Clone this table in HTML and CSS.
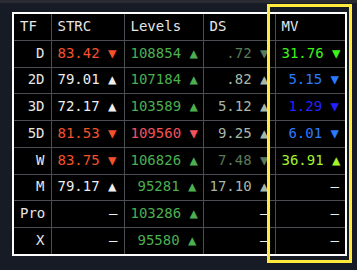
FILE: index.html
```html
<!DOCTYPE html>
<html>
<head>
<meta charset="utf-8">
<link rel="stylesheet" href="styles.css">
</head>
<body>
<div class="topbar"></div>
<div class="wrap">
<table class="tbl">
<colgroup><col class="c1"><col class="c2"><col class="c3"><col class="c4"><col class="c5"></colgroup>
<tr><th>TF</th><th>STRC</th><th>Levels</th><th>DS</th><th>MV</th></tr>
<tr><td>D</td><td class="strc red">83.42 ▼ </td><td class="grn">108854 ▲</td><td class="ds1">.72 ▼</td><td class="mvg">31.76 ▼</td></tr>
<tr><td>2D</td><td class="strc wht">79.01 ▲ </td><td class="grn">107184 ▲</td><td class="ds2">.82 ▲</td><td class="mvb">5.15 ▼</td></tr>
<tr><td>3D</td><td class="strc wht">72.17 ▲ </td><td class="grn">103589 ▲</td><td class="ds2">5.12 ▲</td><td class="mvv">1.29 ▼</td></tr>
<tr><td>5D</td><td class="strc red">81.53 ▼ </td><td class="lred">109560 <span class="ared">▼</span></td><td class="ds2">9.25 ▲</td><td class="mvb">6.01 ▼</td></tr>
<tr><td>W</td><td class="strc red">83.75 ▼ </td><td class="grn">106826 ▲</td><td class="ds1">7.48 ▼</td><td class="mvy">36.91 ▲</td></tr>
<tr><td>M</td><td class="strc wht">79.17 ▲ </td><td class="grn">95281 ▲</td><td class="ds2">17.10 ▲</td><td class="wht">—</td></tr>
<tr><td>Pro</td><td class="wht">—</td><td class="grn">103286 ▲</td><td class="wht">—</td><td class="wht">—</td></tr>
<tr><td>X</td><td class="wht">—</td><td class="grn">95580 ▲</td><td class="wht">—</td><td class="wht">—</td></tr>
</table>
<div class="hl"></div>
</div>
</body>
</html>
```
FILE: styles.css
```css
html, body { margin: 0; padding: 0; }
body {
  background: #161b26;
  width: 357px;
  height: 270px;
  overflow: hidden;
  position: relative;
}
.topbar { height: 3px; background: #2a2c31; }
.wrap { padding: 9px 0 0 12px; }
.tbl {
  border-collapse: collapse;
  table-layout: fixed;
  width: 333px;
  background: #000;
  border: 2px solid #fff;
  font-family: "DejaVu Sans Mono", monospace;
  font-size: 14px;
  color: #e6e6e6;
}
.c1 { width: 38px; }
.c2 { width: 73px; }
.c3 { width: 79px; }
.c4 { width: 72px; }
.c5 { width: 71px; }
th, td {
  border: 1px solid #4a4e52;
  height: 23.75px;
  padding: 0 6px 2px 6px;
  white-space: pre;
  font-weight: normal;
  line-height: 16px;
}
th { text-align: left; padding-left: 6px; }
td { text-align: right; }
.red { color: #f4512c; }
.wht { color: #eeeeee; }
.grn { color: #4caf50; }
.lred { color: #f2525c; }
.ared { color: #f7525f; }
.ds1 { color: #5b7a5b; }
.ds2 { color: #a8b8a8; }
.mvg { color: #3cf51a; }
.mvb { color: #2a7bff; }
.mvv { color: #2222ff; }
.mvy { color: #a6f52a; }
.hl {
  position: absolute;
  left: 267px;
  top: 4px;
  width: 79px;
  height: 253px;
  border: 3px solid #ffeb3b;
}
```
